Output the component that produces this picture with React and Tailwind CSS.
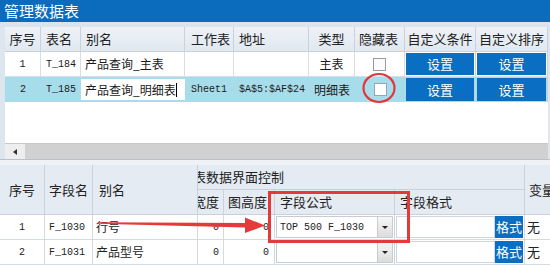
import React from "react";

const cjk = { fontFamily: '"Noto Sans CJK SC", "Noto Sans", sans-serif' };
const mono = { fontFamily: '"Liberation Mono", "Noto Sans CJK SC", monospace' };

const Check = ({ white }) => (
  <div
    className={`w-[13px] h-[13px] border ${
      white ? "border-[#8fa6b4] bg-white" : "border-[#9a9a9a] bg-[#fbfbfb]"
    }`}
  />
);

const SetBtn = ({ w }) => (
  <div className={`${w} h-full p-px border-r border-[#c9d2dc]`}>
    <div className="h-full bg-[#0a6ec2] text-white text-[13px] flex items-center justify-center">
      设置
    </div>
  </div>
);

const Combo = ({ text }) => (
  <div className="w-[120px] h-full border-r border-[#c9d2dc] p-px">
    <div className="h-full bg-white border border-[#c6ccd2] flex items-center">
      <span className="flex-1 pl-[3px] text-[10px] text-[#222]" style={mono}>
        {text}
      </span>
      <div className="w-[15px] h-full border-l border-[#c6ccd2] bg-gradient-to-b from-[#f7f7f7] to-[#dcdcdc] flex items-center justify-center">
        <div className="w-0 h-0 border-l-[3px] border-r-[3px] border-t-[3px] border-l-transparent border-r-transparent border-t-[#222]" />
      </div>
    </div>
  </div>
);

const LowerRow = ({ n, name, alias, formula }) => (
  <div className="flex h-[25px] bg-white border-b border-[#d3dae2] text-[12px] text-[#222]">
    <div className="w-[45px] border-r border-[#d3dae2] flex items-center justify-center text-[10px]" style={mono}>
      {n}
    </div>
    <div className="w-[48px] border-r border-[#d3dae2] flex items-center pl-[4px] text-[10px]" style={mono}>
      {name}
    </div>
    <div className="w-[105px] border-r border-[#d3dae2] flex items-center pl-[3px]">{alias}</div>
    <div className="w-[26px] border-r border-[#d3dae2] flex items-center justify-end pr-[4px] text-[10px]" style={mono}>
      0
    </div>
    <div className="w-[51px] border-r border-[#d3dae2] flex items-center justify-end pr-[5px] text-[10px]" style={mono}>
      0
    </div>
    <Combo text={formula} />
    <div className="w-[130px] border-r border-[#d3dae2] flex p-px">
      <div className="flex-1 bg-white border border-[#d0d6dc]" />
      <div className="w-[28px] bg-[#0a6ec2] text-white text-[13px] flex items-center justify-center">格式</div>
    </div>
    <div className="flex-1 flex items-center pl-[2px] text-[13px]">无</div>
  </div>
);

export default function App() {
  return (
    <div className="w-[550px] h-[267px] overflow-hidden relative bg-[#e3e9f0] text-[#1a1a1a]" style={cjk}>
      {/* title */}
      <div className="h-[22px] bg-[#0b6cbd] text-white text-[15px] leading-[22px] pl-[4px]">管理数据表</div>
      <div className="h-[5px] bg-[#dbe4ee]" />

      {/* upper grid */}
      <div className="flex h-[132px]">
        <div className="w-[5px] bg-[#dde5ee]" />
        <div className="w-[543px] flex flex-col bg-white">
          <div className="flex h-[25px] bg-gradient-to-b from-[#eef2f7] to-[#e1e8f0] border-b border-[#c9d2dc] text-[13px] text-[#222]">
            <div className="w-[36px] border-r border-[#c9d2dc] flex items-center justify-center">序号</div>
            <div className="w-[40px] border-r border-[#c9d2dc] flex items-center pl-[5px]">表名</div>
            <div className="w-[104px] border-r border-[#c9d2dc] flex items-center pl-[5px]">别名</div>
            <div className="w-[49px] border-r border-[#c9d2dc] flex items-center pl-[6px]">工作表</div>
            <div className="w-[75px] border-r border-[#c9d2dc] flex items-center pl-[5px]">地址</div>
            <div className="w-[46px] border-r border-[#c9d2dc] flex items-center justify-center">类型</div>
            <div className="w-[50px] border-r border-[#c9d2dc] flex items-center pl-[4px]">隐藏表</div>
            <div className="w-[71px] border-r border-[#c9d2dc] flex items-center justify-center">自定义条件</div>
            <div className="w-[72px] border-r border-[#c9d2dc] flex items-center justify-center">自定义排序</div>
          </div>

          <div className="flex h-[25px] border-b border-[#d8dee5] text-[12px]">
            <div className="w-[36px] border-r border-[#d8dee5] flex items-center justify-center text-[10px]" style={mono}>1</div>
            <div className="w-[40px] border-r border-[#d8dee5] flex items-center pl-[5px] text-[10px]" style={mono}>T_184</div>
            <div className="w-[104px] border-r border-[#d8dee5] flex items-center pl-[4px]">产品查询_主表</div>
            <div className="w-[49px] border-r border-[#d8dee5]" />
            <div className="w-[75px] border-r border-[#d8dee5]" />
            <div className="w-[46px] border-r border-[#d8dee5] flex items-center justify-center">主表</div>
            <div className="w-[50px] border-r border-[#d8dee5] flex items-center justify-center">
              <Check />
            </div>
            <SetBtn w="w-[71px]" />
            <SetBtn w="w-[72px]" />
          </div>

          <div className="flex h-[25px] bg-[#a7dcea] text-[12px]">
            <div className="w-[36px] flex items-center justify-center text-[10px]" style={mono}>2</div>
            <div className="w-[40px] flex items-center pl-[5px] text-[10px]" style={mono}>T_185</div>
            <div className="w-[104px] py-[2px]">
              <div className="h-full bg-white flex items-center pl-[4px]">
                产品查询_明细表<span className="w-px h-[14px] bg-black" />
              </div>
            </div>
            <div className="w-[49px] flex items-center pl-[6px] text-[10px]" style={mono}>Sheet1</div>
            <div className="w-[75px] flex items-center pl-[5px] text-[10px]" style={mono}>$A$5:$AF$24</div>
            <div className="w-[46px] flex items-center justify-center">明细表</div>
            <div className="w-[50px] flex items-center justify-center">
              <Check white />
            </div>
            <SetBtn w="w-[71px]" />
            <SetBtn w="w-[72px]" />
          </div>

          <div className="flex-1" />

          <div className="h-[16px] flex border-t border-[#c8c8c8]">
            <div className="w-[20px] bg-[#eeeeee] flex items-center justify-center">
              <div className="w-0 h-0 border-t-[3px] border-b-[3px] border-r-[4px] border-t-transparent border-b-transparent border-r-[#333]" />
            </div>
            <div className="flex-1 bg-[#d1d1d1]" />
          </div>
        </div>
        <div className="flex-1 bg-[#dde5ee]" />
      </div>

      {/* separator */}
      <div className="h-px bg-[#b9c1c9]" />
      <div className="h-[5px] bg-[#eef2f6]" />

      {/* lower grid */}
      <div className="flex">
        <div className="w-[5px] bg-[#dde5ee]" />
        <div className="flex-1 flex flex-col">
          <div className="flex h-[50px] bg-[#e5ebf2] border-b border-[#c9d2dc] text-[13px] text-[#222]">
            <div className="w-[45px] border-r border-[#c9d2dc] flex items-center justify-center">序号</div>
            <div className="w-[48px] border-r border-[#c9d2dc] flex items-center pl-[4px]">字段名</div>
            <div className="w-[105px] border-r border-[#c9d2dc] flex items-center pl-[6px]">别名</div>
            <div className="w-[327px] border-r border-[#c9d2dc] flex flex-col">
              <div className="h-[25px] border-b border-[#c9d2dc] flex items-center overflow-hidden">
                <span className="ml-[-5px] whitespace-nowrap">表数据界面控制</span>
              </div>
              <div className="h-[24px] flex">
                <div className="w-[26px] border-r border-[#c9d2dc] flex items-center justify-end pr-[4px] overflow-hidden whitespace-nowrap">
                  宽度
                </div>
                <div className="w-[51px] border-r border-[#c9d2dc] flex items-center pl-[4px] overflow-hidden whitespace-nowrap">
                  图高度
                </div>
                <div className="w-[120px] border-r border-[#c9d2dc] flex items-center pl-[5px]">字段公式</div>
                <div className="flex-1 flex items-center pl-[5px]">字段格式</div>
              </div>
            </div>
            <div className="flex-1 flex items-center pl-[4px] whitespace-nowrap overflow-hidden">变量</div>
          </div>
          <LowerRow n="1" name="F_1030" alias="行号" formula="TOP 500 F_1030" />
          <LowerRow n="2" name="F_1031" alias="产品型号" formula="" />
          <div className="h-[10px] bg-white" />
        </div>
      </div>

      {/* annotations */}
      <svg className="absolute inset-0 pointer-events-none" width="550" height="267">
        <ellipse cx="379" cy="88" rx="15.5" ry="14" fill="none" stroke="#e2363c" strokeWidth="2.2" />
        <rect x="269.5" y="192.5" width="139" height="49" fill="none" stroke="#e53a3a" strokeWidth="3" />
        <polygon
          points="98,222.3 245,223 245,217.5 265,225.5 245,233 245,227.5 98,223.8"
          fill="#e53a3a"
        />
      </svg>
    </div>
  );
}
